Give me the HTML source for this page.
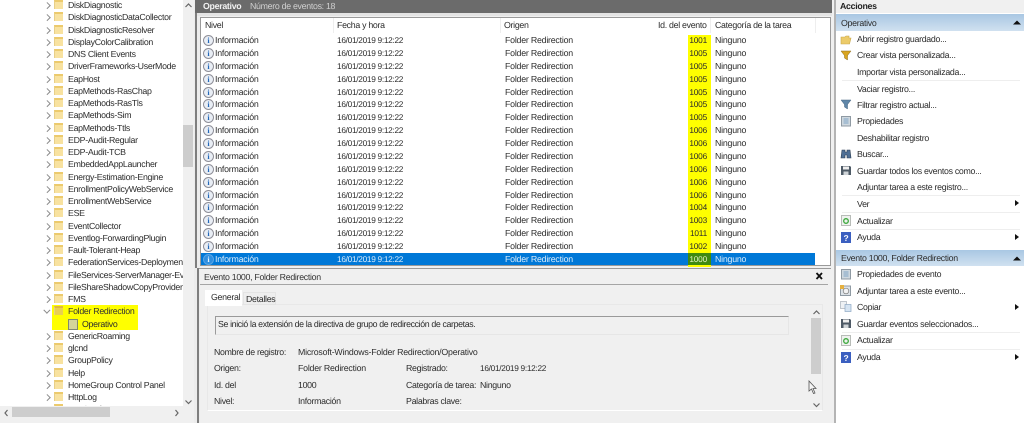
<!DOCTYPE html>
<html lang="es"><head><meta charset="utf-8"><style>
html,body{margin:0;padding:0;background:#f0f0f0}
#p{position:relative;width:1024px;height:423px;overflow:hidden;background:#f0f0f0;font-family:"Liberation Sans",sans-serif;font-size:8.8px;letter-spacing:-.3px;color:#2c2c2c;filter:blur(.35px);text-rendering:geometricPrecision}
#p div,#p svg{position:absolute}
.t{white-space:nowrap;line-height:12px;height:12px}
#tree{left:0;top:-1px;width:183px;overflow:hidden}
#tree>div{position:relative!important;height:12.26px;line-height:12.26px;padding-left:68px;white-space:nowrap}
#tree>div:before{content:"";position:absolute;left:45px;top:4px;width:3.5px;height:3.5px;border-top:1px solid #8a8a8a;border-right:1px solid #8a8a8a;transform:rotate(45deg)}
#tree>div:after{content:"";position:absolute;left:54px;top:1px;width:8px;height:7px;background:#f8e2a0;border-top:2px solid #ecca6c;border-left:1px solid #e8cf88}
#tree>div.o:before{left:45px;top:2.5px;transform:rotate(135deg)}
#tree>div.o:after{background:#e9d050;border-top-color:#e0b83a}
#tree>div.n{padding-left:82px}
#tree>div.n:before{display:none}
#tree>div.n:after{left:68px;top:1px;width:8px;height:9px;background:#d4d49a;border:1px solid #808870}
#rows{left:201px;top:34px;width:630px}
#rows>div{position:relative!important;height:12.88px;line-height:12.88px;white-space:nowrap}
#rows span{position:absolute;top:0}
#rows i{position:absolute;left:2px;top:1px;width:9px;height:9px;border-radius:50%;background:#e9eef5;border:1px solid #8f8f98;color:#2368b8;font:bold 8px/9px "Liberation Serif",serif;text-align:center;letter-spacing:0}
.a{left:14px;letter-spacing:-.22px}.c{left:136px;font-size:8.3px;letter-spacing:-.3px}.d{left:304px;letter-spacing:-.22px}.e{left:488px;width:18px;text-align:right;font-size:8.3px;letter-spacing:-.2px}.f{left:514px;letter-spacing:-.22px}
.s i{background:#2f8fe0!important;border-color:#5aa6e6!important;color:#e8f4ff!important}
.m{left:857px}
.sep{left:842px;width:178px;height:1px;background:#eeeeee}
.tri{width:0;height:0;border-left:4px solid #111;border-top:3.5px solid transparent;border-bottom:3.5px solid transparent;left:1015px}
</style></head><body><div id="p">

<div style="left:0;top:0;width:194px;height:418px;background:#fff"></div>
<div style="left:80px;top:319px;width:38px;height:9px;background:#e0e080"></div>
<div id="tree">
<div>DiskDiagnostic</div><div>DiskDiagnosticDataCollector</div><div>DiskDiagnosticResolver</div><div>DisplayColorCalibration</div><div>DNS Client Events</div><div>DriverFrameworks-UserMode</div><div>EapHost</div><div>EapMethods-RasChap</div><div>EapMethods-RasTls</div><div>EapMethods-Sim</div><div>EapMethods-Ttls</div><div>EDP-Audit-Regular</div><div>EDP-Audit-TCB</div><div>EmbeddedAppLauncher</div><div>Energy-Estimation-Engine</div><div>EnrollmentPolicyWebService</div><div>EnrollmentWebService</div><div>ESE</div><div>EventCollector</div><div>Eventlog-ForwardingPlugin</div><div>Fault-Tolerant-Heap</div><div>FederationServices-Deployment</div><div>FileServices-ServerManager-Eve</div><div>FileShareShadowCopyProvider</div><div>FMS</div>
<div class="o" style="background:linear-gradient(#ff0,#ff0) 52px 0/86px 100% no-repeat;color:#333">Folder Redirection</div>
<div class="n" style="background:linear-gradient(#ff0,#ff0) 52px 0/86px 100% no-repeat">Operativo</div>
<div>GenericRoaming</div><div>glcnd</div><div>GroupPolicy</div><div>Help</div><div>HomeGroup Control Panel</div><div>HttpLog</div><div>HttpService</div>
</div>
<div style="left:0;top:406px;width:194px;height:12px;background:#f0f0f0"></div>
<div style="left:183px;top:0;width:11px;height:406px;background:#f0f0f0"></div>
<div style="left:183px;top:125px;width:10px;height:42px;background:#cdcdcd"></div>
<div style="left:12px;top:407px;width:98px;height:10px;background:#cdcdcd"></div>
<svg style="left:184px;top:2px" width="9" height="6"><path d="M1.5 5L4.5 2L7.5 5" fill="none" stroke="#666" stroke-width="1.2"/></svg>
<svg style="left:184px;top:399px" width="9" height="6"><path d="M1.5 1.5L4.5 4.5L7.5 1.5" fill="none" stroke="#666" stroke-width="1.2"/></svg>
<svg style="left:3px;top:409px" width="6" height="8"><path d="M4.5 1L2 4L4.5 7" fill="none" stroke="#666" stroke-width="1.2"/></svg>
<svg style="left:174px;top:409px" width="6" height="8"><path d="M1.5 1L4 4L1.5 7" fill="none" stroke="#666" stroke-width="1.2"/></svg>

<div style="left:194px;top:0;width:6px;height:423px;background:#ececec"></div>
<div style="left:195px;top:0;width:2px;height:268px;background:#7e7e7e"></div>
<div style="left:197px;top:268px;width:2px;height:155px;background:#7e7e7e"></div>
<div style="left:195px;top:0;width:637px;height:13px;background:#6b6b6b"></div>
<div class="t" style="left:203px;top:0;color:#f2f2f2;font-weight:bold">Operativo</div>
<div class="t" style="left:250px;top:0;color:#d0d0d0">Número de eventos: 18</div>
<div style="left:197px;top:13px;width:635px;height:3px;background:#e4e4e4"></div>

<div style="left:200px;top:17px;width:631px;height:249px;background:#fff;border:1px solid #9a9a9a;box-sizing:border-box"></div>
<div style="left:333px;top:18px;width:1px;height:15px;background:#eee"></div>
<div style="left:500px;top:18px;width:1px;height:15px;background:#eee"></div>
<div style="left:710px;top:18px;width:1px;height:15px;background:#eee"></div>
<div style="left:815px;top:18px;width:1px;height:15px;background:#eee"></div>
<div class="t" style="left:205px;top:19px">Nivel</div>
<div class="t" style="left:337px;top:19px">Fecha y hora</div>
<div class="t" style="left:504px;top:19px">Origen</div>
<div class="t" style="left:658px;top:19px">Id. del evento</div>
<div class="t" style="left:715px;top:19px">Categoría de la tarea</div>

<div style="left:201px;top:253px;width:614px;height:12px;background:#0078d7"></div>
<div style="left:688px;top:35px;width:23px;height:232px;background:#ff0"></div>
<div style="left:688px;top:253px;width:23px;height:12px;background:#3f8a10"></div>
<div id="rows">
<div><i>i</i><span class="a">Información</span><span class="c">16/01/2019 9:12:22</span><span class="d">Folder Redirection</span><span class="e">1001</span><span class="f">Ninguno</span></div>
<div><i>i</i><span class="a">Información</span><span class="c">16/01/2019 9:12:22</span><span class="d">Folder Redirection</span><span class="e">1005</span><span class="f">Ninguno</span></div>
<div><i>i</i><span class="a">Información</span><span class="c">16/01/2019 9:12:22</span><span class="d">Folder Redirection</span><span class="e">1005</span><span class="f">Ninguno</span></div>
<div><i>i</i><span class="a">Información</span><span class="c">16/01/2019 9:12:22</span><span class="d">Folder Redirection</span><span class="e">1005</span><span class="f">Ninguno</span></div>
<div><i>i</i><span class="a">Información</span><span class="c">16/01/2019 9:12:22</span><span class="d">Folder Redirection</span><span class="e">1005</span><span class="f">Ninguno</span></div>
<div><i>i</i><span class="a">Información</span><span class="c">16/01/2019 9:12:22</span><span class="d">Folder Redirection</span><span class="e">1005</span><span class="f">Ninguno</span></div>
<div><i>i</i><span class="a">Información</span><span class="c">16/01/2019 9:12:22</span><span class="d">Folder Redirection</span><span class="e">1005</span><span class="f">Ninguno</span></div>
<div><i>i</i><span class="a">Información</span><span class="c">16/01/2019 9:12:22</span><span class="d">Folder Redirection</span><span class="e">1006</span><span class="f">Ninguno</span></div>
<div><i>i</i><span class="a">Información</span><span class="c">16/01/2019 9:12:22</span><span class="d">Folder Redirection</span><span class="e">1006</span><span class="f">Ninguno</span></div>
<div><i>i</i><span class="a">Información</span><span class="c">16/01/2019 9:12:22</span><span class="d">Folder Redirection</span><span class="e">1006</span><span class="f">Ninguno</span></div>
<div><i>i</i><span class="a">Información</span><span class="c">16/01/2019 9:12:22</span><span class="d">Folder Redirection</span><span class="e">1006</span><span class="f">Ninguno</span></div>
<div><i>i</i><span class="a">Información</span><span class="c">16/01/2019 9:12:22</span><span class="d">Folder Redirection</span><span class="e">1006</span><span class="f">Ninguno</span></div>
<div><i>i</i><span class="a">Información</span><span class="c">16/01/2019 9:12:22</span><span class="d">Folder Redirection</span><span class="e">1006</span><span class="f">Ninguno</span></div>
<div><i>i</i><span class="a">Información</span><span class="c">16/01/2019 9:12:22</span><span class="d">Folder Redirection</span><span class="e">1004</span><span class="f">Ninguno</span></div>
<div><i>i</i><span class="a">Información</span><span class="c">16/01/2019 9:12:22</span><span class="d">Folder Redirection</span><span class="e">1003</span><span class="f">Ninguno</span></div>
<div><i>i</i><span class="a">Información</span><span class="c">16/01/2019 9:12:22</span><span class="d">Folder Redirection</span><span class="e">1011</span><span class="f">Ninguno</span></div>
<div><i>i</i><span class="a">Información</span><span class="c">16/01/2019 9:12:22</span><span class="d">Folder Redirection</span><span class="e">1002</span><span class="f">Ninguno</span></div>
<div class="s" style="color:#d9ecfb"><i>i</i><span class="a">Información</span><span class="c">16/01/2019 9:12:22</span><span class="d">Folder Redirection</span><span class="e" style="color:#e0f0c0">1000</span><span class="f">Ninguno</span></div>
</div>

<div style="left:199px;top:268px;width:632px;height:1px;background:#9a9a9a"></div>
<div class="t" style="left:204px;top:271px;color:#333">Evento 1000, Folder Redirection</div>
<div style="left:200px;top:284px;width:628px;height:1px;background:#a5a5a5"></div>
<svg style="left:815px;top:272px" width="9" height="8"><path d="M1.5 1L7 7M7 1L1.5 7" stroke="#111" stroke-width="1.8"/></svg>

<div style="left:207px;top:304px;width:616px;height:107px;background:#f0f0f0;border:1px solid #e8e8e8;border-bottom:1px solid #fff;box-sizing:border-box"></div>
<div style="left:243px;top:292px;width:33px;height:13px;background:#eee;border:1px solid #e4e4e4;box-sizing:border-box"></div>
<div style="left:205px;top:290px;width:37px;height:16px;background:#fff"></div>
<div class="t" style="left:211px;top:291px">General</div>
<div class="t" style="left:246px;top:292.5px">Detalles</div>
<div style="left:215px;top:316px;width:574px;height:19px;border-top:1px solid #9a9a9a;border-left:1px solid #9a9a9a;border-right:1px solid #e6e6e6;border-bottom:1px solid #e6e6e6;box-sizing:border-box"></div>
<div class="t" style="left:218px;top:318px;letter-spacing:-.37px">Se inició la extensión de la directiva de grupo de redirección de carpetas.</div>
<div class="t" style="left:214px;top:346px">Nombre de registro:</div>
<div class="t" style="left:298px;top:346px;letter-spacing:-.22px">Microsoft-Windows-Folder Redirection/Operativo</div>
<div class="t" style="left:214px;top:362px">Origen:</div>
<div class="t" style="left:298px;top:362px;letter-spacing:-.22px">Folder Redirection</div>
<div class="t" style="left:406px;top:362px">Registrado:</div>
<div class="t" style="left:480px;top:362px;font-size:8.3px;letter-spacing:-.3px">16/01/2019 9:12:22</div>
<div class="t" style="left:214px;top:379px">Id. del</div>
<div class="t" style="left:298px;top:379px">1000</div>
<div class="t" style="left:406px;top:379px">Categoría de tarea:</div>
<div class="t" style="left:480px;top:379px">Ninguno</div>
<div class="t" style="left:214px;top:395px">Nivel:</div>
<div class="t" style="left:298px;top:395px">Información</div>
<div class="t" style="left:406px;top:395px">Palabras clave:</div>
<div style="left:811px;top:318px;width:10px;height:56px;background:#cdcdcd"></div>
<svg style="left:812px;top:309px" width="9" height="6"><path d="M1.5 5L4.5 2L7.5 5" fill="none" stroke="#666" stroke-width="1.2"/></svg>
<svg style="left:812px;top:402px" width="9" height="6"><path d="M1.5 1.5L4.5 4.5L7.5 1.5" fill="none" stroke="#666" stroke-width="1.2"/></svg>
<svg style="left:807px;top:380px" width="10" height="15"><path d="M2 1V11L4.5 9L6.5 13.5L8 13L6 8.500L9 8.500Z" fill="#f4f4f4" stroke="#555" stroke-width=".8"/></svg>

<div style="left:832px;top:0;width:3px;height:423px;background:#f0f0f0"></div>
<div style="left:834px;top:0;width:2px;height:423px;background:#b4b4b4"></div>
<div style="left:836px;top:0;width:188px;height:423px;background:#fff"></div>
<div style="left:836px;top:0;width:188px;height:13px;background:#f0f0f0"></div>
<div class="t" style="left:840px;top:0;font-weight:bold;color:#222">Acciones</div>
<div style="left:836px;top:14px;width:188px;height:17px;background:linear-gradient(#a9c7e3,#d0e1f0)"></div>
<div class="t" style="left:841px;top:17px">Operativo</div>
<svg style="left:1013px;top:20px" width="8" height="5"><path d="M0 4.500L4 .5L8 4.500Z" fill="#111"/></svg>
<div style="left:836px;top:250px;width:188px;height:16px;background:linear-gradient(#a9c7e3,#d0e1f0)"></div>
<div class="t" style="left:841px;top:252px">Evento 1000, Folder Redirection</div>
<svg style="left:1013px;top:256px" width="8" height="5"><path d="M0 4.500L4 .5L8 4.500Z" fill="#111"/></svg>

<div class="t m" style="top:33px">Abrir registro guardado...</div>
<div class="t m" style="top:49px">Crear vista personalizada...</div>
<div class="t m" style="top:65.500px">Importar vista personalizada...</div>
<div class="t m" style="top:82.500px">Vaciar registro...</div>
<div class="t m" style="top:99px">Filtrar registro actual...</div>
<div class="t m" style="top:115px">Propiedades</div>
<div class="t m" style="top:132px">Deshabilitar registro</div>
<div class="t m" style="top:148px">Buscar...</div>
<div class="t m" style="top:164.500px">Guardar todos los eventos como...</div>
<div class="t m" style="top:181px">Adjuntar tarea a este registro...</div>
<div class="t m" style="top:197.500px">Ver</div>
<div class="t m" style="top:214.500px">Actualizar</div>
<div class="t m" style="top:231px">Ayuda</div>
<div class="t m" style="top:268px">Propiedades de evento</div>
<div class="t m" style="top:285px">Adjuntar tarea a este evento...</div>
<div class="t m" style="top:301px">Copiar</div>
<div class="t m" style="top:317.500px">Guardar eventos seleccionados...</div>
<div class="t m" style="top:334px">Actualizar</div>
<div class="t m" style="top:351px">Ayuda</div>

<div class="sep" style="top:80px"></div>
<div class="sep" style="top:195px"></div>
<div class="sep" style="top:212px"></div>
<div class="sep" style="top:229px"></div>
<div class="sep" style="top:332px"></div>
<div class="sep" style="top:349px"></div>

<div class="tri" style="top:200px"></div>
<div class="tri" style="top:234px"></div>
<div class="tri" style="top:304px"></div>
<div class="tri" style="top:354px"></div>

<svg style="left:840px;top:34px" width="12" height="11"><path d="M1 3H5L6 2H9V4H11L9.500 10H1Z" fill="#eccb6a" stroke="#c9a84a" stroke-width=".6"/></svg>
<svg style="left:840px;top:50px" width="12" height="11"><path d="M1 1H11L7.500 5.500V10L4.500 8V5.500Z" fill="#d9a520" stroke="#8a6a20" stroke-width=".5"/></svg>
<svg style="left:840px;top:99px" width="12" height="11"><path d="M1 1H11L7.500 5.500V10L4.500 8V5.500Z" fill="#5f86a8" stroke="#44627e" stroke-width=".5"/></svg>
<svg style="left:841px;top:116px" width="11" height="11"><rect x=".5" y=".5" width="9" height="9.500" fill="#cfd8df" stroke="#8f9aa3"/><path d="M2.500 3H7.500M2.500 5H7.500M2.500 7H7.500" stroke="#7fa3c4"/></svg>
<svg style="left:840px;top:149px" width="12" height="11"><path d="M2 1H5V3H7V1H10L11 9H7V6H5V9H1Z" fill="#4f6f95" stroke="#2d3e52" stroke-width=".6"/></svg>
<svg style="left:840px;top:165px" width="12" height="11"><path d="M1 1H10L11 2V10H1Z" fill="#4e5a66"/><rect x="3" y="1.500" width="6" height="3" fill="#eee"/><rect x="3.500" y="6.500" width="5" height="3.500" fill="#cfd4d8"/></svg>
<svg style="left:841px;top:215px" width="11" height="11"><rect x=".5" y=".5" width="9" height="10" fill="#eef2ee" stroke="#b8bcb8"/><circle cx="5" cy="6" r="2.300" fill="none" stroke="#3aa83a" stroke-width="1.300"/></svg>
<svg style="left:841px;top:232px" width="10" height="11"><rect width="10" height="11" fill="#3b5fc0"/><text x="2.500" y="9" font-size="8.500" font-weight="bold" font-family="Liberation Sans" fill="#fff">?</text></svg>
<svg style="left:841px;top:269px" width="11" height="11"><rect x=".5" y=".5" width="9" height="9.500" fill="#cfd8df" stroke="#8f9aa3"/><path d="M2.500 3H7.500M2.500 5H7.500M2.500 7H7.500" stroke="#7fa3c4"/></svg>
<svg style="left:840px;top:285px" width="12" height="11"><rect x=".5" y="1" width="10" height="9.500" fill="#dde3e8" stroke="#8f9aa3"/><circle cx="6" cy="6" r="2.800" fill="#f2f2f2" stroke="#777" stroke-width=".7"/><rect x="0" y="0" width="4" height="4" fill="#e5b040"/></svg>
<svg style="left:840px;top:301px" width="12" height="11"><rect x=".5" y=".5" width="6" height="7" fill="#eef1f4" stroke="#a8b0b8" stroke-width=".7"/><rect x="5" y="3.500" width="6" height="7" fill="#d6e4f2" stroke="#8ea8c4" stroke-width=".7"/></svg>
<svg style="left:840px;top:318px" width="12" height="11"><path d="M1 1H10L11 2V10H1Z" fill="#4e5a66"/><rect x="3" y="1.500" width="6" height="3" fill="#eee"/><rect x="3.500" y="6.500" width="5" height="3.500" fill="#cfd4d8"/></svg>
<svg style="left:841px;top:335px" width="11" height="11"><rect x=".5" y=".5" width="9" height="10" fill="#eef2ee" stroke="#b8bcb8"/><circle cx="5" cy="6" r="2.300" fill="none" stroke="#3aa83a" stroke-width="1.300"/></svg>
<svg style="left:841px;top:352px" width="10" height="11"><rect width="10" height="11" fill="#3b5fc0"/><text x="2.500" y="9" font-size="8.500" font-weight="bold" font-family="Liberation Sans" fill="#fff">?</text></svg>
</div></body></html>
